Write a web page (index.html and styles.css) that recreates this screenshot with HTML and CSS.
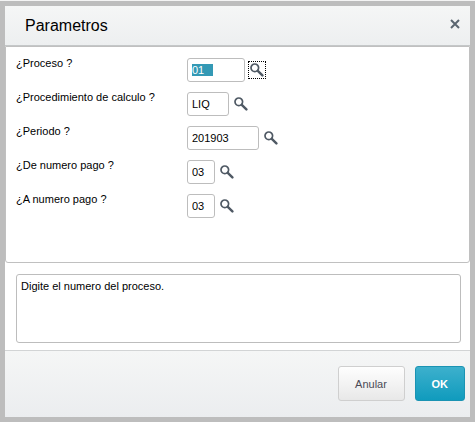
FILE: index.html
```html
<!DOCTYPE html>
<html lang="es">
<head>
<meta charset="utf-8">
<title>Parametros</title>
<link rel="stylesheet" href="styles.css">
</head>
<body>
<svg class="defs" aria-hidden="true">
  <symbol id="lens" viewBox="0 0 14 14">
    <circle cx="4.8" cy="4.8" r="3.8" fill="none" stroke="currentColor" stroke-width="1.7"/>
    <path d="M7.8 7.8L12.4 12.4" fill="none" stroke="currentColor" stroke-width="2.4" stroke-linecap="round"/>
  </symbol>
</svg>
<form class="dialog" role="dialog" aria-labelledby="title">
  <header class="header">
    <h1 class="title" id="title">Parametros</h1>
    <button class="close" type="button" aria-label="Cerrar">
      <svg class="cross" viewBox="0 0 10 10"><path d="M1 1L9 9M9 1L1 9" fill="none" stroke="currentColor" stroke-width="2"/></svg>
    </button>
  </header>
  <section class="fields">
    <div class="row">
      <label class="label" for="proceso">¿Proceso ?</label>
      <input class="input size-m" id="proceso" type="text" value="01   ">
      <button class="lookup current" type="button" aria-label="Buscar proceso"><svg class="lens"><use href="#lens"/></svg></button>
    </div>
    <div class="row">
      <label class="label" for="procedimiento">¿Procedimiento de calculo ?</label>
      <input class="input size-s" id="procedimiento" type="text" value="LIQ">
      <button class="lookup" type="button" aria-label="Buscar procedimiento"><svg class="lens"><use href="#lens"/></svg></button>
    </div>
    <div class="row">
      <label class="label" for="periodo">¿Periodo ?</label>
      <input class="input size-l" id="periodo" type="text" value="201903">
      <button class="lookup" type="button" aria-label="Buscar periodo"><svg class="lens"><use href="#lens"/></svg></button>
    </div>
    <div class="row">
      <label class="label" for="desde">¿De numero pago ?</label>
      <input class="input size-xs" id="desde" type="text" value="03">
      <button class="lookup" type="button" aria-label="Buscar pago inicial"><svg class="lens"><use href="#lens"/></svg></button>
    </div>
    <div class="row">
      <label class="label" for="hasta">¿A numero pago ?</label>
      <input class="input size-xs" id="hasta" type="text" value="03">
      <button class="lookup" type="button" aria-label="Buscar pago final"><svg class="lens"><use href="#lens"/></svg></button>
    </div>
  </section>
  <div class="help">
    <textarea class="message" aria-label="Ayuda" readonly>Digite el numero del proceso.</textarea>
  </div>
  <footer class="footer">
    <button class="button" type="button">Anular</button>
    <button class="button primary" type="submit">OK</button>
  </footer>
</form>
<script src="script.js"></script>
</body>
</html>
```
FILE: styles.css
```css
* {
  box-sizing: border-box;
}

body {
  margin: 0;
  min-height: 100vh;
  display: flex;
  padding: 5px;
  border-top: 1px solid #f4f4f4;
  background: #bdbdbd;
  font: 11px/14px "Liberation Sans", Arial, sans-serif;
  color: #000;
}

.defs {
  position: absolute;
  width: 0;
  height: 0;
}

button,
input,
textarea {
  font: inherit;
  color: inherit;
  margin: 0;
}

.dialog {
  flex: 1;
  display: flex;
  flex-direction: column;
  background: #fff;
}

.header {
  display: flex;
  align-items: center;
  justify-content: space-between;
  height: 40px;
  padding: 0 10px 0 20px;
  border-bottom: 1px solid #c4c7c8;
  background: linear-gradient(#f5f6f6, #edeff0);
}

.title {
  margin: 0;
  font-size: 16px;
  line-height: 20px;
  font-weight: normal;
}

.close {
  display: flex;
  padding: 0;
  margin-bottom: 4px;
  border: 0;
  background: none;
  color: #5b6670;
}

.cross {
  width: 10px;
  height: 10px;
}

.fields {
  flex: 1;
  display: flex;
  flex-direction: column;
  gap: 10px;
  padding: 11px 10px 10px;
  border: 1px solid #c0c0c0;
  border-radius: 0 0 3px 3px;
}

.row {
  display: flex;
  align-items: center;
  height: 24px;
}

.label {
  align-self: flex-start;
  width: 171px;
  line-height: 10px;
}

.input {
  height: 24px;
  padding: 0 4px;
  border: 1px solid #bdbdbd;
  border-radius: 3px;
  background: #fff;
  outline: none;
  caret-color: transparent;
}

.input::selection {
  background: #3399b5;
  color: #fff;
}

.size-xs { width: 28px; }
.size-s { width: 42px; }
.size-m { width: 58px; }
.size-l { width: 72px; }

.lookup {
  display: flex;
  align-items: center;
  justify-content: center;
  width: 18px;
  height: 18px;
  padding: 0;
  margin-left: 3px;
  border: 1px dotted transparent;
  background: none;
  color: #4f5964;
}

.current {
  border-color: #000;
}

.lens {
  width: 14px;
  height: 14px;
  flex: none;
}

.help {
  display: flex;
  padding: 11px 9px 7px 11px;
}

.message {
  flex: 1;
  height: 69px;
  padding: 4px;
  border: 1px solid #bdbdbd;
  border-radius: 3px;
  resize: none;
  outline: none;
}

.footer {
  display: flex;
  justify-content: flex-end;
  gap: 10px;
  padding: 15px 5px 16px;
  border-top: 1px solid #d2d4d5;
  background: linear-gradient(#f5f6f6, #ebedef);
}

.button {
  height: 35px;
  min-width: 67px;
  padding: 0 16px;
  border: 1px solid #cfcfcf;
  border-radius: 3px;
  background: linear-gradient(#fefefe, #e8e8e8);
  color: #4a4a55;
}

.primary {
  min-width: 50px;
  border-color: #1a93b3;
  background: linear-gradient(#3db0cd, #109bbd);
  color: #fff;
  font-weight: bold;
}
```
FILE: script.js
```js
const first = document.getElementById("proceso");
first.focus();
first.select();
```
